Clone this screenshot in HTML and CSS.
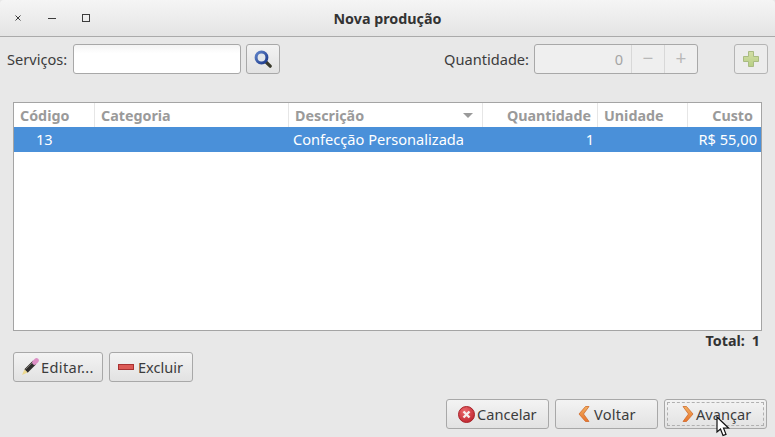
FILE: index.html
```html
<!DOCTYPE html>
<html lang="pt-BR">
<head>
  <meta charset="UTF-8" />
  <title>Nova produção</title>
  <link rel="stylesheet" href="styles.css">
</head>
<body>
  <div class="window">
    <header class="titlebar">
      <div class="win-controls">
        <svg width="8" height="8" viewBox="0 0 8 8"><path d="M1.500 1.500l5 5M6.500 1.500l-5 5" stroke="#3c3c3c" stroke-width="1"/></svg>
        <svg width="8" height="8" viewBox="0 0 8 8"><path d="M0 4.500h8" stroke="#3c3c3c" stroke-width="1"/></svg>
        <svg width="8" height="8" viewBox="0 0 8 8"><rect x=".5" y=".5" width="7" height="7" fill="none" stroke="#3c3c3c"/></svg>
      </div>
      <h1>Nova produção</h1>
    </header>

    <main class="content">
      <div class="toolbar">
        <label class="lbl lbl-servicos">Serviços:</label>
        <input class="search" type="text" />
        <button class="btn btn-icon">
          <svg width="18" height="18" viewBox="0 0 18 18">
            <defs>
              <linearGradient id="lens" x1="0" y1="0" x2="1" y2="1">
                <stop offset="0" stop-color="#5f82c8"/>
                <stop offset="1" stop-color="#1c3a8c"/>
              </linearGradient>
            </defs>
            <path d="M12 12l4.200 4.200" stroke="#3a3a2c" stroke-width="3.200" stroke-linecap="round"/>
            <circle cx="7.500" cy="7.500" r="5.400" fill="#e2e6ea" stroke="url(#lens)" stroke-width="3"/>
          </svg>
        </button>
        <label class="lbl lbl-qtd">Quantidade:</label>
        <div class="spin">
          <span class="spin-val">0</span>
          <span class="spin-btn">−</span>
          <span class="spin-btn">+</span>
        </div>
        <button class="btn btn-icon btn-add">
          <svg width="16" height="16" viewBox="0 0 16 16">
            <defs>
              <linearGradient id="plus" x1="0" y1="0" x2="0" y2="1">
                <stop offset="0" stop-color="#d3dea6"/>
                <stop offset="1" stop-color="#b7cf84"/>
              </linearGradient>
            </defs>
            <path d="M5.500 .5h5v5h5v5h-5v5h-5v-5h-5v-5h5z" fill="url(#plus)" stroke="#a9bb82"/>
          </svg>
        </button>
      </div>

      <div class="table-box">
        <div class="row head">
          <div class="cell c-cod">Código</div>
          <div class="cell c-cat">Categoria</div>
          <div class="cell c-desc">Descrição<i class="sort"></i></div>
          <div class="cell c-qtd right">Quantidade</div>
          <div class="cell c-uni">Unidade</div>
          <div class="cell c-custo right">Custo</div>
        </div>
        <div class="row selected">
          <div class="cell c-cod num">13</div>
          <div class="cell c-cat"></div>
          <div class="cell c-desc">Confecção Personalizada</div>
          <div class="cell c-qtd right">1</div>
          <div class="cell c-uni"></div>
          <div class="cell c-custo right">R$ 55,00</div>
        </div>
      </div>

      <div class="total"><span>Total:</span><span>1</span></div>

      <div class="actions">
        <button class="btn btn-edit">
          <svg width="18" height="18" viewBox="0 0 18 18">
            <path d="M5 13L13.500 4.500" stroke="#2e2c2a" stroke-width="4.600"/>
            <path d="M4.500 11.500L12 4" stroke="#77746e" stroke-width="1"/>
            <path d="M13.500 4.500L15.500 2.500" stroke="#dc8fc4" stroke-width="4.600" stroke-linecap="round"/>
            <path d="M3.400 11.400L6.600 14.600 1 17z" fill="#ecd88e"/>
          </svg>Editar...
        </button>
        <button class="btn btn-del">
          <svg width="16" height="6" viewBox="0 0 16 6"><rect x=".5" y=".5" width="15" height="5" fill="#dc5a56" stroke="#a83232"/></svg>Excluir
        </button>
      </div>

      <div class="nav">
        <button class="btn btn-nav btn-cancel">
          <svg width="17" height="17" viewBox="0 0 17 17">
            <defs>
              <radialGradient id="red" cx=".4" cy=".3" r=".8">
                <stop offset="0" stop-color="#ec6a6e"/>
                <stop offset="1" stop-color="#bb1f2a"/>
              </radialGradient>
            </defs>
            <circle cx="8.500" cy="8.500" r="8" fill="url(#red)" stroke="#a8242a"/>
            <path d="M5.500 5.500l6 6M11.500 5.500l-6 6" stroke="#f6eeee" stroke-width="2.400"/>
          </svg>Cancelar
        </button>
        <button class="btn btn-nav btn-back">
          <svg width="12" height="16" viewBox="0 0 12 16">
            <defs>
              <linearGradient id="chev" x1="0" y1="0" x2="0" y2="1">
                <stop offset="0" stop-color="#f2b060"/>
                <stop offset="1" stop-color="#e8742c"/>
              </linearGradient>
            </defs>
            <path d="M7.500 .5H11L5.500 8l5.500 7.500H7.500L1 8z" fill="url(#chev)" stroke="#cf6a2c" stroke-width=".8"/>
          </svg>Voltar
        </button>
        <button class="btn btn-nav focused">
          <span class="focus-ring">
            <svg width="12" height="16" viewBox="0 0 12 16">
              <defs>
                <linearGradient id="chev2" x1="0" y1="0" x2="0" y2="1">
                  <stop offset="0" stop-color="#f2b060"/>
                  <stop offset="1" stop-color="#e8742c"/>
                </linearGradient>
              </defs>
              <path d="M4.500 .5H1L6.500 8 1 15.500h3.500L11 8z" fill="url(#chev2)" stroke="#cf6a2c" stroke-width=".8"/>
            </svg>Avançar
          </span>
        </button>
      </div>
    </main>

    <svg class="cursor" width="14" height="21" viewBox="0 0 14 21">
      <path d="M1 1v15l3.500-3 2.500 6.500 3-1.200-2.500-6.300h5z" fill="#fff" stroke="#111" stroke-width="1.200"/>
    </svg>
  </div>
</body>
</html>
```

FILE: styles.css
```css
* {
  box-sizing: border-box;
}

body {
  margin: 0;
  background: #e8e8e8;
  font-family: 'Noto Sans', sans-serif;
  font-size: 14.6px;
  color: #3c3c3c;
}

.window {
  position: relative;
  width: 775px;
  height: 437px;
  background: #e8e8e8;
  overflow: hidden;
}

.titlebar {
  position: relative;
  height: 37px;
  display: flex;
  align-items: center;
  justify-content: center;
  background: linear-gradient(#f5f5f5, #e4e4e4);
  border-bottom: 1px solid #aaa;
  border-radius: 4px 4px 0 0;
}

.titlebar h1 {
  margin: 0;
  font-size: 14.3px;
  font-weight: 700;
  color: #333;
}

.win-controls {
  position: absolute;
  left: 14px;
  top: 14px;
  display: flex;
  gap: 26px;
}

.content {
  padding: 7px 7px 0;
}

.toolbar {
  display: flex;
  align-items: center;
  height: 30px;
}

.search {
  width: 168px;
  height: 30px;
  margin-left: 6px;
  border: 1px solid #a8a8a8;
  border-radius: 3px;
  background: linear-gradient(#f4f4f4, #fff 30%);
}

.btn {
  display: inline-flex;
  align-items: center;
  justify-content: center;
  height: 30px;
  padding: 0;
  border: 1px solid #a8a8a8;
  border-radius: 3px;
  background: linear-gradient(#f3f3f3, #e2e2e2);
  font: inherit;
  color: #3c3c3c;
}

.btn-icon {
  width: 34px;
  margin-left: 5px;
}

.lbl-qtd {
  margin-left: auto;
}

.spin {
  display: flex;
  width: 164px;
  height: 30px;
  margin-left: 5px;
  border: 1px solid #a8a8a8;
  border-radius: 3px;
  background: #efefef;
  color: #a5a5a5;
}

.spin-val {
  flex: 1;
  padding-right: 8px;
  text-align: right;
  line-height: 28px;
}

.spin-btn {
  width: 33px;
  border-left: 1px solid #d8d8d8;
  text-align: center;
  font-size: 19px;
  line-height: 26px;
  color: #b8b8b8;
}

.btn-add {
  margin-left: 36px;
  border-color: #b4b4b4;
  background: #ececec;
}

.table-box {
  width: 749px;
  height: 229px;
  margin: 28px 0 0 6px;
  border: 1px solid #a4a4a4;
  background: #fff;
}

.row {
  display: flex;
  height: 25px;
  line-height: 25px;
}

.head {
  height: 24px;
  color: #9a9a9a;
  font-size: 14.3px;
  font-weight: 700;
}

.head .cell {
  position: relative;
  padding: 0 6px;
  border-right: 1px solid #e6e6e6;
}

.head .cell:last-child {
  border-right: 0;
  padding-right: 8px;
}

.selected {
  background: #4a90d9;
  color: #fff;
}

.cell {
  padding: 0 4px;
  white-space: nowrap;
  overflow: hidden;
}

.c-cod { width: 81px; }
.c-cat { width: 194px; }
.c-desc { width: 194px; }
.c-qtd { width: 115px; }
.c-uni { width: 90px; }
.c-custo { width: 73px; }

.right { text-align: right; }
.selected .num { padding-left: 22px; }

.sort {
  position: absolute;
  right: 9px;
  top: 10px;
  border: 5px solid transparent;
  border-top: 5px solid #9a9a9a;
  border-bottom: 0;
}

.total {
  display: flex;
  justify-content: flex-end;
  gap: 7px;
  height: 21px;
  padding-right: 8px;
  font-size: 14.3px;
  font-weight: 700;
  color: #333;
  line-height: 19px;
}

.actions {
  display: flex;
  gap: 6px;
  margin-left: 6px;
}

.btn-edit {
  width: 90px;
  justify-content: flex-start;
  padding-left: 7px;
  gap: 2px;
  letter-spacing: 0.35px;
}

.btn-del {
  width: 84px;
  justify-content: flex-start;
  padding-left: 8px;
  gap: 4px;
}

.nav {
  display: flex;
  justify-content: flex-end;
  gap: 6px;
  margin-top: 17px;
  margin-right: 1px;
}

.btn-nav {
  width: 103px;
  justify-content: flex-start;
}

.btn-cancel {
  padding-left: 11px;
  gap: 2px;
}

.btn-back {
  padding-left: 22px;
  gap: 4px;
  letter-spacing: 0.2px;
}

.focused {
  padding-left: 2px;
}

.focus-ring {
  display: flex;
  align-items: center;
  gap: 2px;
  width: 97px;
  height: 24px;
  padding-left: 14px;
  border: 1px dashed #b0b0b0;
}

.cursor {
  position: absolute;
  left: 716px;
  top: 416px;
}
```
